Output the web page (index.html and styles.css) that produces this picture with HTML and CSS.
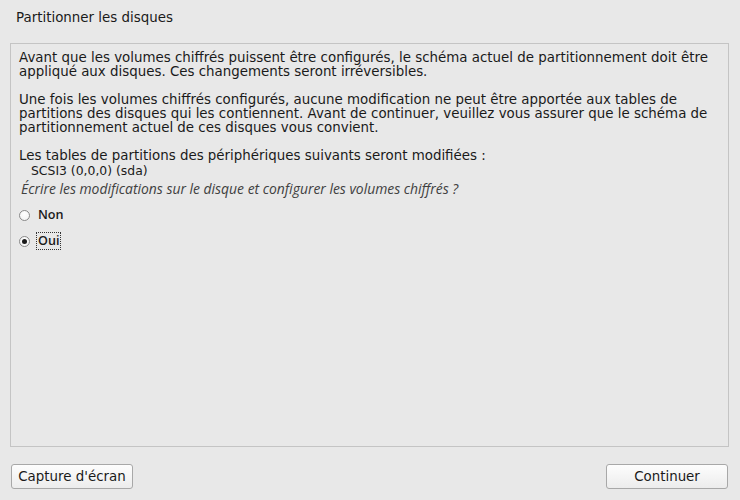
FILE: index.html
```html
<!DOCTYPE html>
<html lang="fr">
<head>
<meta charset="utf-8">
<link rel="stylesheet" href="styles.css">
</head>
<body>
<div class="window">
  <div class="title">Partitionner les disques</div>
  <div class="panel">
    <p class="para">Avant que les volumes chiffrés puissent être configurés, le schéma actuel de partitionnement doit être appliqué aux disques. Ces changements seront irréversibles.</p>
    <p class="para">Une fois les volumes chiffrés configurés, aucune modification ne peut être apportée aux tables de partitions des disques qui les contiennent. Avant de continuer, veuillez vous assurer que le schéma de partitionnement actuel de ces disques vous convient.</p>
    <p class="para last">Les tables de partitions des périphériques suivants seront modifiées :</p>
    <div class="device">SCSI3 (0,0,0) (sda)</div>
    <div class="question">Écrire les modifications sur le disque et configurer les volumes chiffrés ?</div>
    <div class="option first">
      <span class="radio"></span>
      <span class="label">Non</span>
    </div>
    <div class="option second">
      <span class="radio checked"></span>
      <span class="label focused">Oui</span>
    </div>
  </div>
  <div class="footer">
    <button class="btn">Capture d'écran</button>
    <button class="btn">Continuer</button>
  </div>
</div>
</body>
</html>
```
FILE: styles.css
```css
html, body {
  margin: 0;
  padding: 0;
  background: #e8e8e8;
}
.window {
  width: 740px;
  height: 500px;
  display: flex;
  flex-direction: column;
  font-family: "DejaVu Sans", sans-serif;
  font-size: 13.4px;
  color: #1a1a1a;
}
.title {
  height: 43px;
  box-sizing: border-box;
  padding: 11px 0 0 16px;
  line-height: 14px;
}
.panel {
  margin: 0 11px 0 10px;
  height: 404px;
  box-sizing: border-box;
  border: 1px solid #c4c4c4;
  padding: 7px 8px 5px 8px;
  display: flex;
  flex-direction: column;
}
.para {
  margin: 0 0 14px 0;
  line-height: 14px;
}
.para.last {
  margin-bottom: 0;
}
.device {
  font-family: "DejaVu Sans", sans-serif;
  font-size: 12.4px;
  line-height: 14px;
  margin-top: 1px;
  padding-left: 12px;
}
.question {
  font-family: "Open Sans", sans-serif;
  font-style: italic;
  font-size: 13.9px;
  color: #404040;
  line-height: 19px;
  margin-top: 1px;
  padding-left: 2px;
}
.option {
  display: flex;
  align-items: center;
  height: 20px;
}
.option.first {
  margin-top: 7px;
}
.option.second {
  margin-top: 6px;
}
.radio {
  width: 9px;
  height: 9px;
  border: 1px solid #8a8a8a;
  border-radius: 50%;
  background: radial-gradient(circle at 50% 35%, #ffffff, #f0f0f0);
  display: flex;
  align-items: center;
  justify-content: center;
  margin-left: 0;
  margin-right: 6px;
}
.radio.checked::after {
  content: "";
  width: 5px;
  height: 5px;
  border-radius: 50%;
  background: #1a1a1a;
}
.label {
  font-family: "Open Sans", sans-serif;
  font-weight: 600;
  font-size: 12.6px;
  line-height: 16px;
  padding: 0 1px;
  border: 1px dotted transparent;
}
.label.focused {
  border-color: #333;
}
.footer {
  display: flex;
  justify-content: space-between;
  padding: 17px 12px 0 11px;
}
.btn {
  width: 122px;
  height: 25px;
  font-family: "DejaVu Sans", sans-serif;
  font-size: 13.4px;
  color: #1a1a1a;
  border: 1px solid #a8a8a8;
  border-radius: 3px;
  background: linear-gradient(#fdfdfd, #ececec);
  padding: 0;
}
```
